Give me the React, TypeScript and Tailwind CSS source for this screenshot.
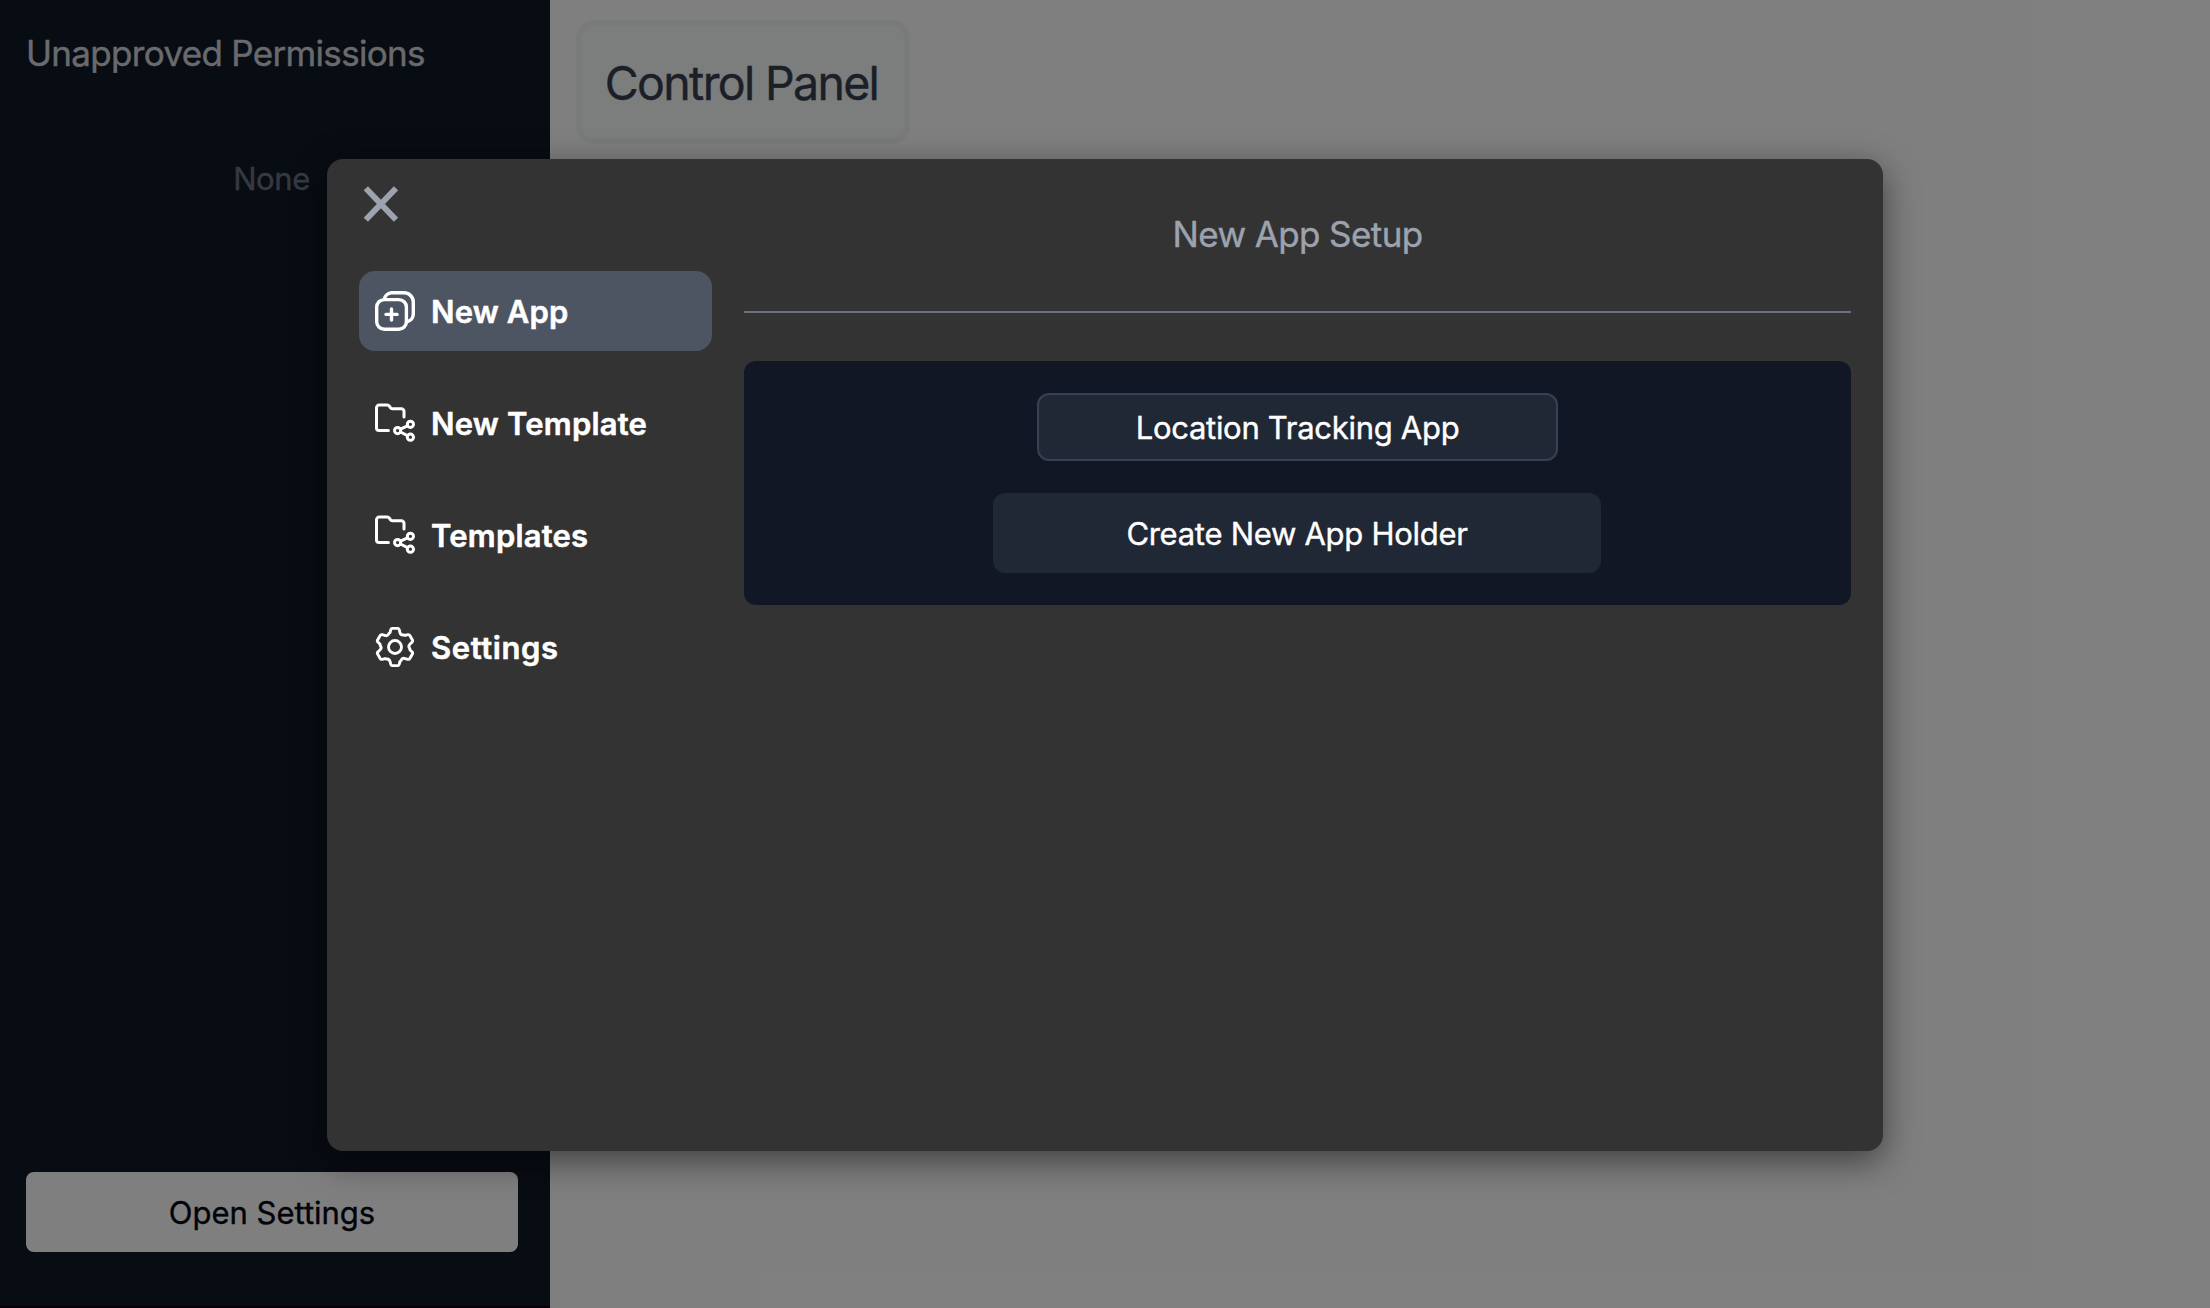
import type { ReactNode } from "react";

function NewAppIcon() {
  return (
    <svg viewBox="0 0 40 40" className="size-10 shrink-0" fill="none" stroke="currentColor" strokeWidth="3.4" strokeLinecap="round" strokeLinejoin="round">
      <rect x="1.7" y="8.6" width="29.7" height="29.7" rx="7.6" />
      <path d="M9.2 8.2A8 8 0 0 1 16.6 1.7H29A9.3 9.3 0 0 1 38.3 11V23.4A8 8 0 0 1 31.9 30.8" />
      <path d="M16.5 17.9V29M11 23.4H22.1" />
    </svg>
  );
}

function FolderShareIcon() {
  return (
    <svg viewBox="0 0 40 40" className="size-10 shrink-0" fill="none" stroke="currentColor" strokeWidth="3" strokeLinecap="round" strokeLinejoin="round">
      <path d="M13.4 27.6H4A2.5 2.5 0 0 1 1.5 25.1V4.8A2.9 2.9 0 0 1 4.4 1.9H12.2C13.1 1.9 13.7 2.2 14.2 2.9L15.3 4.6C15.7 5.3 16.3 5.7 17.2 5.7H26.3A2.7 2.7 0 0 1 29 8.4V14" />
      <circle cx="22.6" cy="27.6" r="3.1" />
      <circle cx="35.4" cy="21.3" r="3.1" />
      <circle cx="35.4" cy="34.2" r="3.1" />
      <path d="M25.5 26.2L32.5 22.8M25.5 29L32.5 32.6" />
    </svg>
  );
}

function gearPath() {
  const tooth: [string, number, number][] = [
    ["L", -4.9, -14.6],
    ["L", -4.3, -17.2],
    ["Q", -3.9, -18.6],
    ["", -2.6, -18.6],
    ["L", 2.6, -18.6],
    ["Q", 3.9, -18.6],
    ["", 4.3, -17.2],
    ["L", 4.9, -14.6],
    ["Q", 5.6, -11.6],
    ["", 8.6, -12.0],
  ];
  let d = "";
  for (let i = 0; i < 6; i++) {
    const a = (i * Math.PI) / 3;
    for (const [cmd, x, y] of tooth) {
      const px = 20 + x * Math.cos(a) - y * Math.sin(a);
      const py = 20 + x * Math.sin(a) + y * Math.cos(a);
      d += `${d ? cmd : "M"}${px.toFixed(2)} ${py.toFixed(2)} `;
    }
  }
  return d + "Z";
}

function GearIcon() {
  return (
    <svg viewBox="0 0 40 40" className="size-10 shrink-0" fill="none" stroke="currentColor" strokeWidth="2.9" strokeLinejoin="round">
      <path d={gearPath()} />
      <circle cx="20" cy="20" r="6.5" />
    </svg>
  );
}

function NavItem({ icon, active, children }: { icon: ReactNode; active?: boolean; children: ReactNode }) {
  return (
    <button className={`flex h-20 w-full items-center gap-4 rounded-2xl px-4 text-left text-[31px] font-semibold text-white [-webkit-text-stroke:0.5px] ${active ? "bg-[#4d5562]" : ""}`}>
      {icon}
      {children}
    </button>
  );
}

export default function App() {
  return (
    <div className="relative flex h-screen w-full overflow-hidden bg-white font-[Inter,sans-serif] [-webkit-text-stroke:0.4px]">
      <aside className="flex w-[550px] shrink-0 flex-col border-b-2 border-[#0a0014] bg-[#111827]">
        <h2 className="pt-[33px] pl-[26px] text-[35px] leading-10 tracking-[-0.68px] text-[#d1d5db]">Unapproved Permissions</h2>
        <p className="mt-[86px] w-[543px] text-center text-[31px] leading-10 tracking-[-0.4px] text-[#6b7280]">None</p>
        <button className="mt-auto mb-[54px] ml-[26px] h-20 w-[492px] rounded-lg bg-white pt-[3px] text-[31px] text-[#040711]">Open Settings</button>
      </aside>
      <main className="flex-1 pt-5 pl-[26px]">
        <h1 className="flex h-[124px] w-[334px] items-center justify-center rounded-[18px] border-6 border-[#f3f4f6] bg-[#f9fafb] pt-1 pr-[3px] text-[46.5px] tracking-[-1.67px] text-[#374151]">
          Control Panel
        </h1>
      </main>

      <div className="absolute inset-0 flex items-center justify-center bg-black/50 pt-0.5">
        <div className="flex h-[992px] w-[1556px] gap-8 rounded-2xl bg-[#333333] px-8 shadow-[0_10px_34px_rgba(0,0,0,0.5)]">
          <div className="flex w-[353px] shrink-0 flex-col">
            <button className="mt-[27px] mb-[49px] ml-1 size-9 text-[#9ca3af]" aria-label="Close">
              <svg viewBox="0 0 36 36" className="size-9" stroke="currentColor" strokeWidth="6">
                <path d="M2.8 2.2L33 33.8M33 2.2L2.8 33.8" />
              </svg>
            </button>
            <nav className="flex flex-col gap-8">
              <NavItem icon={<NewAppIcon />} active>
                <span className="pt-[3px] tracking-[0.16px]">New App</span>
              </NavItem>
              <NavItem icon={<FolderShareIcon />}>
                <span className="pt-[3px] tracking-[0.2px]">New Template</span>
              </NavItem>
              <NavItem icon={<FolderShareIcon />}>
                <span className="pt-[3px] tracking-[0.2px]">Templates</span>
              </NavItem>
              <NavItem icon={<GearIcon />}>
                <span className="pt-[3px] tracking-[0.6px]">Settings</span>
              </NavItem>
            </nav>
          </div>
          <section className="flex-1">
            <h2 className="flex h-[154px] items-center justify-center border-b-2 border-[#6b7280] pb-0.5 text-[35px] leading-10 tracking-[-0.6px] text-[#9ca3af]">
              New App Setup
            </h2>
            <div className="mt-12 flex flex-col items-center gap-8 rounded-xl bg-[#111725] py-8">
              <button className="h-[68px] w-[521px] rounded-xl border-2 border-[#394150] bg-[#212835] pt-[3px] text-[31px] tracking-[-0.29px] text-white">
                Location Tracking App
              </button>
              <button className="mr-px h-20 w-[608px] rounded-xl bg-[#212835] pt-[3px] text-[31px] tracking-[-0.28px] text-white">
                Create New App Holder
              </button>
            </div>
          </section>
        </div>
      </div>
    </div>
  );
}
